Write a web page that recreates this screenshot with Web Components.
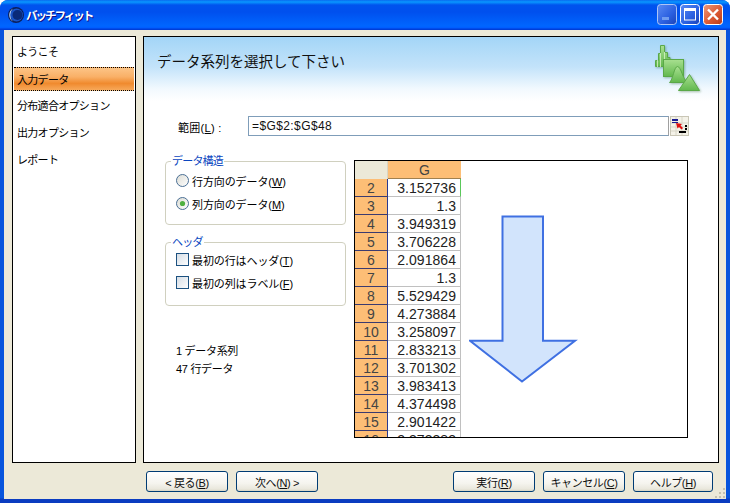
<!DOCTYPE html>
<html lang="ja">
<head>
<meta charset="utf-8">
<title>バッチフィット</title>
<style>
    html, body { margin: 0; padding: 0; background: #fff; }
    body { width: 730px; height: 503px; overflow: hidden; font: 11px "Liberation Sans", "Noto Sans CJK JP", sans-serif; color: #000; }
</style>
</head>
<body>
<batch-window>
    <wizard-nav slot="nav">
        <nav-item>ようこそ</nav-item>
        <nav-item selected>入力データ</nav-item>
        <nav-item>分布適合オプション</nav-item>
        <nav-item>出力オプション</nav-item>
        <nav-item>レポート</nav-item>
    </wizard-nav>
    <wizard-page slot="page" heading="データ系列を選択して下さい">
        <range-field value="=$G$2:$G$48">範囲(<u>L</u>) :</range-field>
        <div slot="left">
            <group-box legend="データ構造" style="--pad:7px">
                <option-row type="radio">行方向のデータ(<u>W</u>)</option-row>
                <option-row type="radio" checked>列方向のデータ(<u>M</u>)</option-row>
            </group-box>
            <group-box legend="ヘッダ" style="--pad:5px">
                <option-row type="check">最初の行はヘッダ(<u>T</u>)</option-row>
                <option-row type="check">最初の列はラベル(<u>F</u>)</option-row>
            </group-box>
            <info-lines>
                <div>1 データ系列</div>
                <div>47 行データ</div>
            </info-lines>
        </div>
        <data-sheet slot="right"></data-sheet>
    </wizard-page>
    <xp-button slot="back">&lt; 戻る(<u>B</u>)</xp-button>
    <xp-button slot="back">次へ(<u>N</u>) &gt;</xp-button>
    <xp-button slot="actions">実行(<u>R</u>)</xp-button>
    <xp-button slot="actions">キャンセル(<u>C</u>)</xp-button>
    <xp-button slot="actions" style="width:80px">ヘルプ(<u>H</u>)</xp-button>
</batch-window>

<script>
class BaseElement extends HTMLElement {
    connectedCallback() {
        if (this.shadowRoot) return;
        this.attachShadow({mode: 'open'});
        this.shadowRoot.innerHTML = this.render();
    }
}

class BatchWindow extends BaseElement {
    render() {
        return `
        <style>
            :host { display: flex; flex-direction: column; width: 730px; height: 503px; box-sizing: border-box; position: relative;
                    background: linear-gradient(#0855dd 0, #0855dd 498px, #0a3cc0 499px); border-radius: 8px 8px 0 0; overflow: hidden; }
            .title { height: 30px; flex: none; display: flex; align-items: center; padding: 0 6px 0 7px; gap: 1px;
                     background: linear-gradient(#0a6af0 0, #0997ff 2px, #0053ee 5px, #0050ee 12px, #0066ff 26px, #005bff 28px, #003dd7 29px, #003dd7 30px); }
            .title b { flex: 1; color: #fff; font-size: 11.5px; letter-spacing: -2px; text-shadow: 1px 1px 0 #0f1089; }
            .btns { display: flex; gap: 3px; margin-top: -2px; margin-right: 1px; }
            .btns svg { display: block; }
            .client { flex: 1; margin: 0 4px 4px; background: #ece9d8; display: flex; flex-direction: column; min-height: 0; }
            .panels { flex: 1; display: flex; gap: 7px; padding: 6px 7px 7px 8px; min-height: 0; }
            .bar { flex: none; height: 29px; box-sizing: border-box; display: flex; justify-content: space-between; padding: 1px 13px 0 142px; }
            .group { display: flex; gap: 8px; }
            .grip { position: absolute; right: 4px; bottom: 4px; }
        </style>
        <div class="title">
            <svg width="18" height="18" viewBox="0 0 18 18">
                <circle cx="9" cy="9" r="8" fill="#0b1f5c"/>
                <circle cx="9.5" cy="9" r="6.5" fill="#1a55c8"/>
                <path d="M6 2.5 A7.5 7.5 0 0 0 6 15.5 A9 9 0 0 1 6 2.5Z" fill="#b9d6f5"/>
                <circle cx="10.5" cy="9" r="5" fill="#0a2a78"/>
            </svg>
            <b>バッチフィット</b>
            <div class="btns">
                <svg width="20" height="21" viewBox="0 0 20 21">
                    <defs><linearGradient id="bl" x1="0" y1="0" x2="1" y2="1"><stop offset="0" stop-color="#5a8cf5"/><stop offset=".6" stop-color="#2a5fe0"/><stop offset="1" stop-color="#1a42b8"/></linearGradient></defs>
                    <rect x=".5" y=".5" width="19" height="20" rx="3" fill="url(#bl)" stroke="#cfdcf8" stroke-opacity=".8"/>
                    <rect x="5" y="13" width="7" height="3" fill="#6f9cf0"/>
                </svg>
                <svg width="20" height="21" viewBox="0 0 20 21">
                    <rect x=".5" y=".5" width="19" height="20" rx="3" fill="url(#bl)" stroke="#fff"/>
                    <rect x="4.5" y="5" width="11" height="11" fill="none" stroke="#fff"/>
                    <rect x="4" y="4" width="12" height="3" fill="#fff"/>
                </svg>
                <svg width="20" height="21" viewBox="0 0 20 21">
                    <defs><linearGradient id="rd" x1="0" y1="0" x2="1" y2="1"><stop offset="0" stop-color="#ec9a7c"/><stop offset=".55" stop-color="#dc5a34"/><stop offset="1" stop-color="#b83a18"/></linearGradient></defs>
                    <rect x=".5" y=".5" width="19" height="20" rx="3" fill="url(#rd)" stroke="#fff"/>
                    <path d="M5 5.5 L15 15.5 M15 5.5 L5 15.5" stroke="#fff" stroke-width="2.4"/>
                </svg>
            </div>
        </div>
        <div class="client">
            <div class="panels"><slot name="nav"></slot><slot name="page"></slot></div>
            <div class="bar">
                <div class="group"><slot name="back"></slot></div>
                <div class="group"><slot name="actions"></slot></div>
            </div>
        </div>
        <svg class="grip" width="12" height="12" viewBox="0 0 12 12" fill="#c5c2b0">
            <rect x="9" y="1" width="2" height="2"/><rect x="5" y="5" width="2" height="2"/><rect x="9" y="5" width="2" height="2"/>
            <rect x="1" y="9" width="2" height="2"/><rect x="5" y="9" width="2" height="2"/><rect x="9" y="9" width="2" height="2"/>
        </svg>`;
    }
}

class WizardNav extends BaseElement {
    render() {
        return `
        <style>
            :host { display: block; width: 124px; flex: none; box-sizing: border-box; border: 1px solid #000; background: #fff; padding: 1px 0; }
        </style>
        <slot></slot>`;
    }
}

class NavItem extends BaseElement {
    render() {
        return `
        <style>
            :host { display: flow-root; height: 27px; font-size: 11px; letter-spacing: -.7px; }
            div { height: 100%; box-sizing: border-box; display: flex; align-items: center; padding: 0 0 1px 4px; }
            :host([selected]) div { margin: 2px 1px 1px 1px; height: 24px; padding: 0 0 0 3px; border: 1px dotted #000; border-width: 1px 0;
                background: linear-gradient(#fcc486 0, #f9b067 40%, #f08a2e 70%, #f7a859 100%); }
        </style>
        <div><slot></slot></div>`;
    }
}

class WizardPage extends BaseElement {
    render() {
        return `
        <style>
            :host { display: flex; flex-direction: column; width: 576px; flex: none; box-sizing: border-box; border: 1px solid #000;
                    background: linear-gradient(#a3d5f7 0, #c3e3fa 30px, #f2f9fe 52px, #fff 64px); }
            header { flex: none; height: 79px; display: flex; justify-content: space-between; padding: 7px 17px 0 13px; box-sizing: border-box; }
            h1 { margin: 4px 0 0; font-size: 14.5px; font-weight: normal; line-height: 28px; color: #111; }
            svg { display: block; filter: drop-shadow(1px 1px 1px rgba(30, 90, 30, .35)); }
            .body { flex: 1; display: flex; gap: 8px; padding: 24px 0 0 21px; }
            .left { width: 181px; }
        </style>
        <header>
            <h1>${this.getAttribute('heading')}</h1>
            <svg width="47" height="48" viewBox="655 44 47 48">
                <defs>
                    <linearGradient id="g" x1="0" y1="0" x2="0" y2="1"><stop offset="0" stop-color="#a8e090"/><stop offset="1" stop-color="#62b84e"/></linearGradient>
                </defs>
                <g stroke="#5aa848" stroke-width="1" fill="url(#g)">
                    <path d="M656.5 66.5 V60.5 H659.5 V53.5 H661.5 V45.5 H665.5 V52.5 H668.5 V57.5 H671 V66.5Z"/>
                    <path d="M658.5 60 V67 M661.5 53 V67 M665.5 52 V67" fill="none" stroke="#d8f2c8" stroke-width=".8"/>
                    <rect x="664.5" y="59.5" width="20" height="17"/>
                    <path d="M670.5 82.5 C674 80 675 66.5 678.5 66.5 C682 66.5 684 80 688.5 82.5Z"/>
                    <path d="M679.5 90.5 L690.5 74.5 L700.5 90.5Z"/>
                </g>
            </svg>
        </header>
        <slot></slot>
        <div class="body">
            <div class="left"><slot name="left"></slot></div>
            <slot name="right"></slot>
        </div>`;
    }
}

class RangeField extends BaseElement {
    render() {
        return `
        <style>
            :host { display: flex; align-items: center; height: 20px; padding-left: 34px; font-size: 11px; letter-spacing: .3px; }
            .label { width: 70px; flex: none; padding-top: 1px; box-sizing: border-box; }
            .input { width: 421px; height: 20px; box-sizing: border-box; border: 1px solid #7f9db9; border-right-color: #a0a0a0; background: #fff; padding: 0 0 0 3px;
                     line-height: 19px; font-size: 12px; letter-spacing: .4px; color: #111; }
            svg { margin-left: 1px; display: block; }
        </style>
        <div class="label"><slot></slot></div>
        <div class="input">${this.getAttribute('value')}</div>
        <svg width="19" height="20" viewBox="0 0 19 20">
            <rect x=".5" y=".5" width="18" height="19" fill="#f4f2e8" stroke="#c9c6b6"/>
            <path d="M1 7 H18 M1 11 H18 M1 15 H18 M6 1 V19 M12 1 V19" stroke="#d8d6c8"/>
            <rect x="2" y="3" width="6" height="2" fill="#1a1a90"/>
            <rect x="2" y="6" width="6" height="1" fill="#1a1a90"/>
            <rect x="9" y="15" width="7" height="2" fill="#000"/>
            <rect x="15" y="9" width="2" height="2" fill="#000"/>
            <rect x="15" y="12" width="2" height="2" fill="#000"/>
            <path d="M6 7 L12 8 L10.5 9.5 L13 12 L11.5 13.5 L9 11 L7.5 12.5Z" fill="#e01010"/>
        </svg>`;
    }
}

class GroupBox extends BaseElement {
    render() {
        return `
        <style>
            :host { display: block; position: relative; box-sizing: border-box; width: 181px; height: 64px; padding: var(--pad) 0 0 10px; margin: 1px 0 17px;
                    border: 1px solid #d0d0bf; border-radius: 4px; background: #fff; }
            .legend { position: absolute; left: 5px; top: -8px; padding: 0 1px; background: #fff; color: #0a46c0; font-size: 11px; line-height: 14px; letter-spacing: -.8px; }
        </style>
        <div class="legend">${this.getAttribute('legend')}</div>
        <slot></slot>`;
    }
}

class OptionRow extends BaseElement {
    render() {
        const checked = this.hasAttribute('checked');
        const mark = this.getAttribute('type') === 'radio'
            ? `<svg width="13" height="13" viewBox="0 0 13 13">
                   <defs><linearGradient id="r" x1="0" y1="0" x2="1" y2="1"><stop offset="0" stop-color="#dcdcd4"/><stop offset="1" stop-color="#fff"/></linearGradient></defs>
                   <circle cx="6.5" cy="6.5" r="6" fill="url(#r)" stroke="#4a6f95"/>
                   ${checked ? '<circle cx="6.5" cy="6.5" r="2.6" fill="#4fb040"/>' : ''}
               </svg>`
            : `<svg width="13" height="13" viewBox="0 0 13 13">
                   <defs><linearGradient id="c" x1="0" y1="0" x2="1" y2="1"><stop offset="0" stop-color="#d4dce4"/><stop offset="1" stop-color="#fff"/></linearGradient></defs>
                   <rect x=".5" y=".5" width="12" height="12" fill="url(#c)" stroke="#1c5180"/>
               </svg>`;
        return `
        <style>
            :host { display: flex; align-items: center; gap: 3px; height: 23px; font-size: 11px; letter-spacing: -.1px; }
            svg { flex: none; display: block; }
        </style>
        ${mark}<span><slot></slot></span>`;
    }
}

class InfoLines extends BaseElement {
    render() {
        return `
        <style>
            :host { display: block; padding: 19px 0 0 11px; font-size: 11px; line-height: 18px; letter-spacing: -.3px; }
        </style>
        <slot></slot>`;
    }
}

class DataSheet extends BaseElement {
    render() {
        const values = ['3.152736', '1.3', '3.949319', '3.706228', '2.091864', '1.3', '5.529429', '4.273884',
            '3.258097', '2.833213', '3.701302', '3.983413', '4.374498', '2.901422', '3.373383'];
        const rows = values.map((v, i) => `<div class="num">${i + 2}</div><div class="val${i === 0 ? ' first' : ''}">${v}</div>`).join('');
        return `
        <style>
            :host { display: block; position: relative; width: 334px; height: 278px; box-sizing: border-box; border: 1px solid #000; background: #fff; overflow: hidden; flex: none; }
            .grid { display: grid; grid-template-columns: 33px 73px; grid-auto-rows: 18px; width: 106px; font-size: 14px; color: #222; letter-spacing: .05px; }
            .grid > div { box-sizing: border-box; line-height: 19px; }
            .corner { background: #ece9d8; border-right: 1px solid #d8d5c4; }
            .head { background: #fdbe76; text-align: center; border-bottom: 1px solid #a08050; color: #444; }
            .num { background: #fdbe76; text-align: center; border-bottom: 1px solid #3a3a70; border-right: 1px solid #2a3a90; color: #444; }
            .val { text-align: right; padding-right: 4px; border-bottom: 1px solid #c0c0c0; border-right: 1px solid #c0c0c0; }
            .val.first { border-right: 1px solid #5ac85a; }
            svg { position: absolute; left: 114px; top: 53px; }
        </style>
        <div class="grid">
            <div class="corner"></div><div class="head">G</div>
            ${rows}
        </div>
        <svg width="110" height="170" viewBox="469 214 110 170">
            <path d="M502.5 216.5 H543 V340.7 H575 L522 381.5 L470 340.7 H502.5Z" fill="#d2e4fc" stroke="#3f70e2" stroke-width="2"/>
        </svg>`;
    }
}

class XpButton extends BaseElement {
    render() {
        return `
        <style>
            :host { display: block; width: 82px; height: 21px; box-sizing: border-box; border: 1px solid #003c74; border-radius: 3px;
                    background: linear-gradient(#fff 0, #f5f4ee 60%, #e9e7dc 90%, #d8d4c2 100%); font-size: 11px; letter-spacing: -.4px; color: #111; }
            div { height: 100%; display: flex; align-items: center; justify-content: center; }
        </style>
        <div><span><slot></slot></span></div>`;
    }
}

customElements.define('batch-window', BatchWindow);
customElements.define('wizard-nav', WizardNav);
customElements.define('nav-item', NavItem);
customElements.define('wizard-page', WizardPage);
customElements.define('range-field', RangeField);
customElements.define('group-box', GroupBox);
customElements.define('option-row', OptionRow);
customElements.define('info-lines', InfoLines);
customElements.define('data-sheet', DataSheet);
customElements.define('xp-button', XpButton);
</script>
</body>
</html>
